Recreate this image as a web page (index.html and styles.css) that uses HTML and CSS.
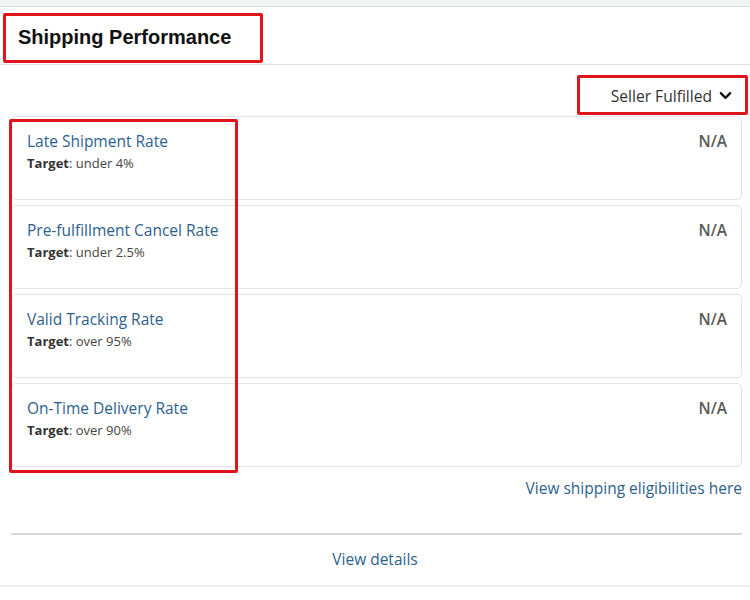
FILE: index.html
```html
<html>

<head>
    <title>Shipping Performance</title>
    <link rel="stylesheet" href="styles.css">
</head>

<body>
    <div class="topbar"></div>
    <div class="panel">
        <div class="panel-header">
            <div class="mark mark-title">
                <h2 class="panel-title">Shipping Performance</h2>
            </div>
        </div>
        <div class="filter-row">
            <div class="mark mark-filter">
                <span class="filter-label">Seller Fulfilled</span>
                <svg class="chevron" viewBox="0 0 16 16" width="15" height="15">
                    <path d="M3 5.5 L8 10.5 L13 5.5" fill="none" stroke="#111" stroke-width="2.4" stroke-linecap="round" stroke-linejoin="round" />
                </svg>
            </div>
        </div>
        <div class="metrics">
            <div class="metric">
                <div class="metric-info">
                    <a class="metric-name" href="#">Late Shipment Rate</a>
                    <p class="metric-target"><strong>Target</strong>: under 4%</p>
                </div>
                <span class="metric-value">N/A</span>
            </div>
            <div class="metric">
                <div class="metric-info">
                    <a class="metric-name" href="#">Pre-fulfillment Cancel Rate</a>
                    <p class="metric-target"><strong>Target</strong>: under 2.5%</p>
                </div>
                <span class="metric-value">N/A</span>
            </div>
            <div class="metric">
                <div class="metric-info">
                    <a class="metric-name" href="#">Valid Tracking Rate</a>
                    <p class="metric-target"><strong>Target</strong>: over 95%</p>
                </div>
                <span class="metric-value">N/A</span>
            </div>
            <div class="metric">
                <div class="metric-info">
                    <a class="metric-name" href="#">On-Time Delivery Rate</a>
                    <p class="metric-target"><strong>Target</strong>: over 90%</p>
                </div>
                <span class="metric-value">N/A</span>
            </div>
            <!-- red outline around the metric names -->
            <div class="mark mark-metrics"></div>
        </div>
        <div class="eligibility">
            <a class="link" href="#">View shipping eligibilities here</a>
        </div>
        <div class="panel-footer">
            <a class="link" href="#">View details</a>
        </div>
    </div>
</body>

</html>
```

FILE: styles.css
```css
body {
    font-family: "Open Sans", "Liberation Sans", Arial, sans-serif;
    margin: 0;
    padding: 0;
    background-color: #ffffff;
    color: #111111;
}

.topbar {
    height: 6px;
    background-color: #f2f3f3;
    border-bottom: 1px solid #dcdcdc;
}

.panel {
    background-color: #ffffff;
}

.mark {
    border: 3px solid #e0151c;
    border-radius: 2px;
}

.panel-header {
    height: 58px;
    padding: 6px 0 0 3px;
    box-sizing: border-box;
    border-bottom: 1px solid #dddddd;
}

.mark-title {
    width: 242px;
    height: 44px;
    display: flex;
    align-items: center;
    padding-left: 12px;
}

.panel-title {
    margin: 0;
    font-family: "Liberation Sans", Arial, sans-serif;
    font-size: 20px;
    font-weight: bold;
    color: #111111;
    position: relative;
    top: -1px;
}

.filter-row {
    display: flex;
    justify-content: flex-end;
    padding: 10px 2px 0 0;
    height: 51px;
    box-sizing: border-box;
}

.mark-filter {
    width: 153px;
    height: 34px;
    display: flex;
    align-items: center;
    justify-content: flex-end;
    padding-right: 12px;
}

.filter-label {
    font-size: 15.6px;
    color: #333333;
    margin-right: 6px;
    position: relative;
    top: 1px;
}

.chevron {
    display: block;
}

.metrics {
    position: relative;
    display: flex;
    flex-direction: column;
    gap: 5px;
    margin: 0 8px 0 11px;
}

.metric {
    height: 84px;
    box-sizing: border-box;
    border: 1px solid #e3e3e3;
    border-radius: 5px;
    padding: 13px 14px 0 15px;
    display: flex;
    justify-content: space-between;
    align-items: flex-start;
}

.metric-name {
    font-size: 15.5px;
    color: #2d5f8e;
    text-decoration: none;
}

.metric-target {
    margin: 2px 0 0;
    font-size: 13px;
    color: #444444;
}

.metric-target strong {
    font-weight: 700;
    color: #333333;
}

.metric-value {
    font-size: 15.5px;
    font-weight: 600;
    color: #5a5a5a;
}

.mark-metrics {
    position: absolute;
    left: -2px;
    top: 3px;
    width: 223px;
    height: 348px;
    pointer-events: none;
}

.link {
    font-size: 15.5px;
    color: #2d5f8e;
    text-decoration: none;
}

.eligibility {
    text-align: right;
    padding-top: 10px;
    height: 68px;
    box-sizing: border-box;
    border-bottom: 2px solid #d6d6d6;
    margin: 0 8px 0 11px;
}

.panel-footer {
    text-align: center;
    padding-top: 13px;
    height: 52px;
    box-sizing: border-box;
    border-bottom: 2px solid #ececec;
}
```
